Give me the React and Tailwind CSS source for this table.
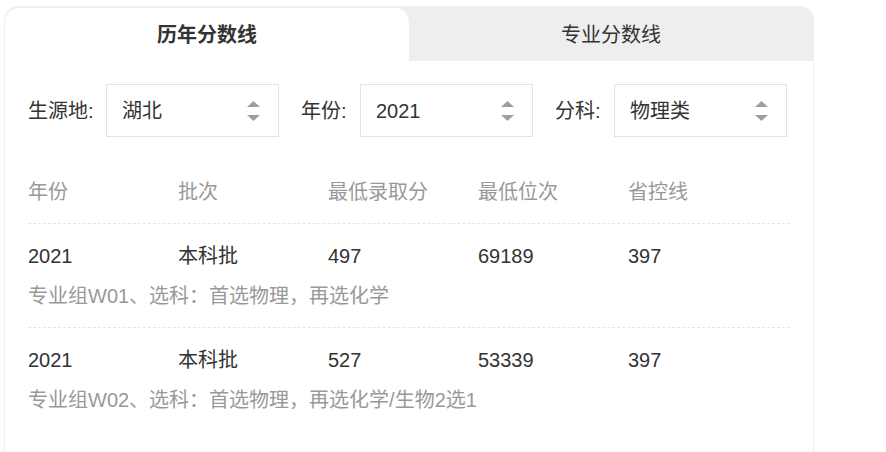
const FILTERS = [
  { label: '生源地:', width: 'w-[78px]', value: '湖北' },
  { label: '年份:', width: 'w-[59px]', value: '2021' },
  { label: '分科:', width: 'w-[59px]', value: '物理类' },
];

const HEADERS = ['年份', '批次', '最低录取分', '最低位次', '省控线'];

const ROWS = [
  {
    cells: ['2021', '本科批', '497', '69189', '397'],
    note: '专业组W01、选科：首选物理，再选化学',
  },
  {
    cells: ['2021', '本科批', '527', '53339', '397'],
    note: '专业组W02、选科：首选物理，再选化学/生物2选1',
  },
];

function Arrows() {
  return (
    <svg width="13" height="20" viewBox="0 0 13 20" className="shrink-0">
      <polygon points="6.5,0 13,6 0,6" fill="#9e9e9e" />
      <polygon points="0,14 13,14 6.5,20" fill="#9e9e9e" />
    </svg>
  );
}

export default function App() {
  return (
    <div className="w-[886px] h-[452px] overflow-hidden bg-white font-['Liberation_Sans','Noto_Sans_CJK_SC',sans-serif] text-[20px] text-[#333]">
      <div className="mt-[6px] ml-[4px] w-[810px] border-x border-[#eeeeee] rounded-t-[14px] pb-[30px]">

        {/* Tabs */}
        <div className="flex h-[55px] pt-[2px] bg-[#eeeeee] rounded-t-[14px]">
          <div className="flex-1 bg-white rounded-t-[14px] flex items-center justify-center font-bold text-[#333]">
            历年分数线
          </div>
          <div className="flex-1 flex items-center justify-center text-[#333]">
            专业分数线
          </div>
        </div>

        <div className="px-[23px]">
          {/* Filters */}
          <div className="flex items-center mt-[23px] gap-[22px]">
            {FILTERS.map((f) => (
              <div key={f.label} className="flex items-center">
                <span className={`${f.width} shrink-0 leading-[26px]`}>{f.label}</span>
                <div className="w-[173px] h-[53px] border border-[#e3e3e3] flex items-center justify-between pl-[15px] pr-[18px]">
                  <span>{f.value}</span>
                  <Arrows />
                </div>
              </div>
            ))}
          </div>

          {/* Table header */}
          <div className="grid grid-cols-[repeat(5,150px)] mt-[42px] pb-[18px] leading-[26px] text-[#999]">
            {HEADERS.map((h) => (
              <div key={h}>{h}</div>
            ))}
          </div>

          {ROWS.map((row, i) => (
            <div key={i} className="border-t border-dashed border-[#e5e5e5] pt-[19px] pb-[18px]">
              <div className="grid grid-cols-[repeat(5,150px)] leading-[26px]">
                {row.cells.map((c, j) => (
                  <div key={j}>{c}</div>
                ))}
              </div>
              <div className="mt-[14px] leading-[26px] text-[#999]">{row.note}</div>
            </div>
          ))}
        </div>
      </div>
    </div>
  );
}
